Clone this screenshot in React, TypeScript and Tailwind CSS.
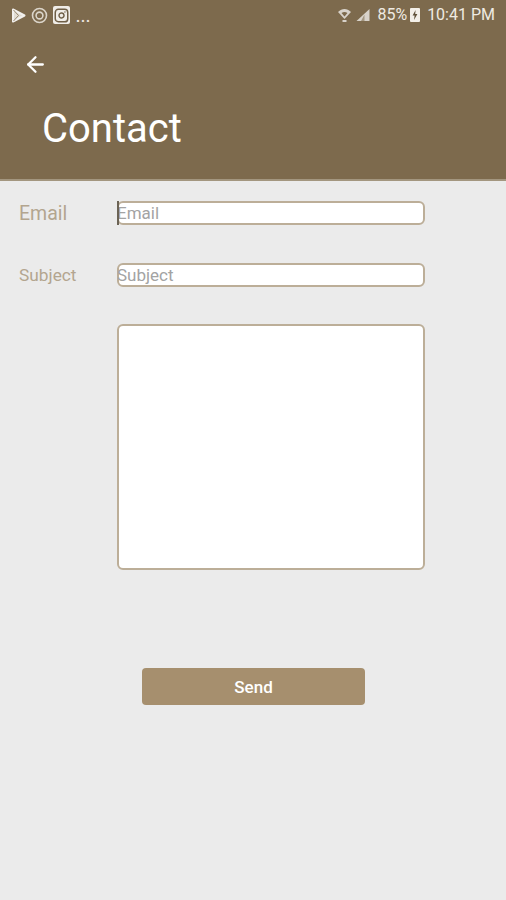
import { ArrowLeft, Instagram } from "lucide-react";

const FONT = { fontFamily: "Roboto, sans-serif" };

function StatusBar() {
  return (
    <div className="flex h-[31px] items-center justify-between pb-px pl-[11px] pr-[11px] text-white">
      <div className="flex items-center gap-[5px]">
        <svg width="15" height="15" viewBox="0 0 15 15" className="opacity-90">
          <path d="M2 1.5 13.5 7.5 2 13.5Z" fill="#eeeae3" stroke="#fff" strokeWidth="2" strokeLinejoin="round" />
          <path d="M2.5 2 7.5 7.5 2.5 13" fill="none" stroke="#9a8a72" strokeWidth="1" />
        </svg>
        <svg width="17" height="17" viewBox="0 0 17 17" className="opacity-90">
          <circle cx="8.5" cy="8.5" r="7" fill="none" stroke="#e6e1d8" strokeWidth="1.6" />
          <circle cx="8.5" cy="8.5" r="3.4" fill="none" stroke="#e6e1d8" strokeWidth="1.6" />
        </svg>
        <span className="flex h-[18px] w-[17px] items-center justify-center rounded-[2px] bg-[#f0ede8]">
          <Instagram size={15} strokeWidth={2.4} className="text-[#6f5f47]" />
        </span>
        <span className="ml-px mt-[3px] text-[14px] font-bold leading-none tracking-[1px] text-[#eee9e0]">...</span>
      </div>
      <div className="flex items-center text-[#efeae2]">
        <svg width="15" height="15" viewBox="0 0 15 15" className="mr-[3px] opacity-70">
          <path d="M1 4C5 0 10 0 14 4L7.5 11Z" fill="#fff" />
          <path d="M4.5 5C6.5 3.6 8.5 3.6 10.5 5L7.5 8.5Z" fill="#7d6a4d" />
          <rect x="5.5" y="12" width="4" height="2" fill="#fff" />
        </svg>
        <svg width="16" height="14" viewBox="0 0 15 14" className="mr-[6px] opacity-70">
          <path d="M14 1V13H1Z" fill="#fff" />
          <path d="M9 6.5V13H5.5Z" fill="#b5aa98" />
        </svg>
        <span className="text-[16px] leading-none">85%</span>
        <span className="ml-[3px] mr-[7px] flex h-[14px] w-[10px] items-center justify-center rounded-[1px] bg-[#f3efe8]">
          <svg width="6" height="10" viewBox="0 0 6 10">
            <path d="M3.6 0 .6 5.6H2.6L2 10 5.4 4H3.2Z" fill="#5f5038" />
          </svg>
        </span>
        <span className="text-[16px] leading-none">10:41 PM</span>
      </div>
    </div>
  );
}

function Field({
  label,
  labelClass,
  rowClass,
  focused,
}: {
  label: string;
  labelClass: string;
  rowClass: string;
  focused?: boolean;
}) {
  return (
    <div className={`flex items-center ${rowClass}`}>
      <span className={`mt-[2px] w-[117px] pl-[19px] leading-none text-[#b3a58f] ${labelClass}`}>{label}</span>
      <div className="relative flex h-[24px] w-[308px] items-center rounded-[6px] border-2 border-[#bcae98] bg-white pt-px text-[17px] leading-none text-[#a3a3a3]">
        {focused && <span className="absolute -left-[2px] -top-[2px] h-[24px] w-[2px] bg-[#6b6355]" />}
        <span className="-ml-[2px]">{label}</span>
      </div>
    </div>
  );
}

export default function App() {
  return (
    <div className="min-h-[900px] w-[506px] bg-[#ebebeb]" style={FONT}>
      <header className="h-[181px] border-b-2 border-[#a3967f] bg-[#7d6a4d]">
        <StatusBar />
        <div className="pl-[23px] pt-[21px]">
          <ArrowLeft size={25} strokeWidth={2.2} className="text-white" />
        </div>
        <h1 className="pl-[42px] pt-[28px] text-[40px] leading-[47px] text-white">Contact</h1>
      </header>

      <Field label="Email" labelClass="text-[19.5px]" rowClass="mt-[20px]" focused />
      <Field label="Subject" labelClass="text-[17.3px]" rowClass="mt-[38px]" />

      <div className="ml-[117px] mt-[37px] h-[246px] w-[308px] rounded-[6px] border-2 border-[#bcae98] bg-white" />

      <div className="ml-[142px] mt-[98px] flex h-[37px] w-[223px] items-center justify-center rounded-[4px] bg-[#a68f6e] pt-[2px] text-[17px] font-medium text-white">
        Send
      </div>
    </div>
  );
}
